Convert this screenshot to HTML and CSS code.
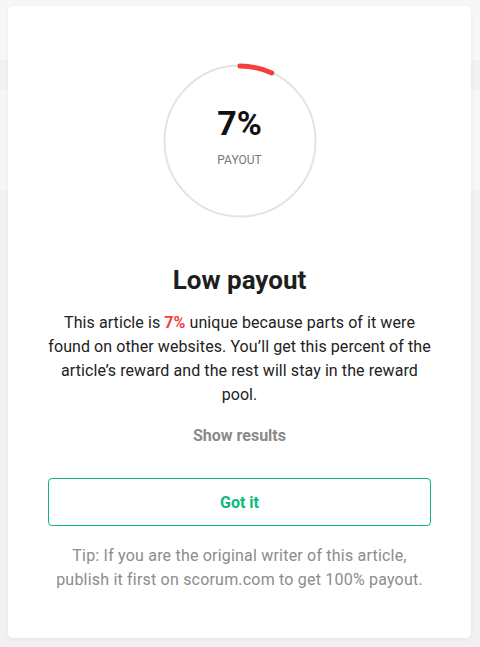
FILE: index.html
```html
<!DOCTYPE html>
<html>
<head>
<meta charset="utf-8">
<link rel="stylesheet" href="styles.css">
</head>
<body>
<div class="backdrop">
  <div class="card">
    <div class="gauge">
      <svg class="ring" width="156" height="156" viewBox="0 0 156 156">
        <circle cx="78" cy="78" r="75.5" fill="none" stroke="#e3e3e3" stroke-width="2"/>
        <path d="M78 3 A75 75 0 0 1 109.7 10" fill="none" stroke="#f4403a" stroke-width="5" stroke-linecap="round"/>
      </svg>
      <div class="gauge-text">
        <div class="pct">7%</div>
        <div class="label">PAYOUT</div>
      </div>
    </div>
    <h1 class="title">Low payout</h1>
    <p class="desc">This article is <span class="hl">7%</span> unique because parts of it were found on other websites. You’ll get this percent of the article’s reward and the rest will stay in the reward pool.</p>
    <div class="show">Show results</div>
    <button class="btn">Got it</button>
    <p class="tip">Tip: If you are the original writer of this article, publish it first on scorum.com to get 100% payout.</p>
  </div>
</div>
</body>
</html>
```
FILE: styles.css
```css
html, body {
  margin: 0;
  padding: 0;
}
body {
  background: #f3f3f3;
  font-family: Roboto, "Liberation Sans", sans-serif;
  width: 480px;
  height: 647px;
  overflow: hidden;
}
.backdrop {
  padding: 6px 9px 9px 8px;
  background: linear-gradient(#f7f7f7 0, #f7f7f7 60px, #f1f1f1 60px, #f1f1f1 90px, #f6f6f6 90px, #f6f6f6 190px, #f1f1f1 190px);
}
.card {
  background: #fff;
  border-radius: 5px;
  box-shadow: 0 1px 4px rgba(0,0,0,0.05);
  height: 632px;
  box-sizing: border-box;
  padding: 57px 40px 0;
  display: flex;
  flex-direction: column;
  align-items: center;
  text-align: center;
}
.gauge {
  position: relative;
  width: 156px;
  height: 156px;
}
.ring {
  display: block;
}
.gauge-text {
  position: absolute;
  inset: 0;
  display: flex;
  flex-direction: column;
  align-items: center;
  padding-top: 40px;
}
.pct {
  font-size: 34px;
  font-weight: 700;
  color: #111;
  line-height: 40px;
}
.label {
  margin-top: 10px;
  font-size: 12px;
  color: #777;
  line-height: 14px;
}
.title {
  margin: 45px 0 0;
  font-size: 26px;
  font-weight: 700;
  color: #1e1e1e;
  line-height: 32px;
}
.desc {
  margin: 15px 0 0;
  font-size: 16px;
  line-height: 24px;
  color: #222;
  letter-spacing: 0.08px;
}
.hl {
  color: #f4403a;
  font-weight: 700;
}
.show {
  margin-top: 17px;
  font-size: 16px;
  font-weight: 700;
  color: #8a8a8a;
  line-height: 24px;
}
.btn {
  margin-top: 30px;
  width: 100%;
  height: 48px;
  border: 1px solid #0bb97c;
  border-radius: 4px;
  background: #fff;
  color: #0bb97c;
  font-family: inherit;
  font-size: 16px;
  font-weight: 700;
  padding-top: 2px;
}
.tip {
  margin: 18px 0 0;
  font-size: 16px;
  line-height: 24px;
  color: #8c8c8c;
  letter-spacing: 0.2px;
}
```
